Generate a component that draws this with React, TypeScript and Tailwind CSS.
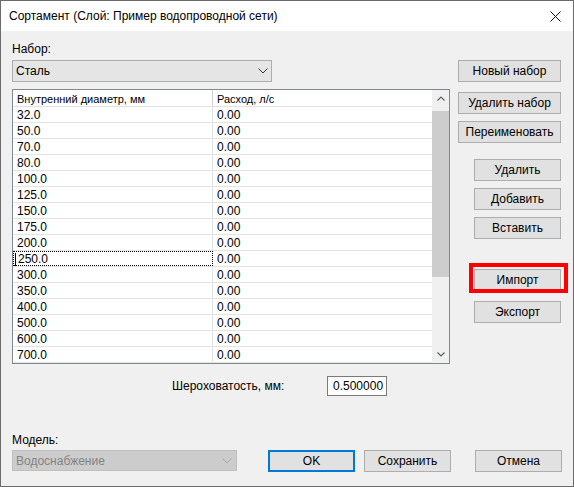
import React from 'react';

const diameters = [
    '32.0', '50.0', '70.0', '80.0', '100.0', '125.0', '150.0', '175.0',
    '200.0', '250.0', '300.0', '350.0', '400.0', '500.0', '600.0', '700.0',
];

const ui = { fontFamily: '"Liberation Sans", Arial, sans-serif' };

const Chevron: React.FC<{ color?: string }> = ({ color = '#333333' }) => (
    <svg width="10" height="6" viewBox="0 0 10 6" fill="none">
        <path d="M0.5 0.5 L5 5 L9.5 0.5" stroke={color} strokeWidth="1" />
    </svg>
);

const Button: React.FC<{ label: string; className?: string; primary?: boolean }> = ({
    label,
    className = '',
    primary = false,
}) => (
    <div
        className={`flex items-center justify-center bg-[#e1e1e1] text-[12px] leading-[16px] text-black ${
            primary ? 'border-2 border-[#0078d7]' : 'border border-[#adadad]'
        } ${className}`}
    >
        {label}
    </div>
);

export default function App() {
    return (
        <div
            className="w-[574px] h-[487px] border border-[#6b6b6b] flex flex-col bg-[#f0f0f0] text-black"
            style={ui}
        >
            {/* Title bar */}
            <div className="h-[30px] bg-white flex items-center justify-between pl-[8px] pr-[12px]">
                <span className="text-[12px] leading-[16px]">Сортамент (Слой: Пример водопроводной сети)</span>
                <svg width="11" height="11" viewBox="0 0 11 11" fill="none">
                    <path d="M0.5 0.5 L10.5 10.5 M10.5 0.5 L0.5 10.5" stroke="#111111" strokeWidth="1" />
                </svg>
            </div>

            {/* Body */}
            <div className="flex flex-col pl-[11px] pr-[11px]">
                <div className="flex">
                    {/* Left column */}
                    <div className="w-[438px] flex flex-col pt-[10px]">
                        <div className="text-[12px] leading-[16px]">Набор:</div>
                        <div className="mt-[3px] w-[260px] h-[22px] bg-[#e5e5e5] border border-[#adadad] flex items-center justify-between pl-[3px] pr-[3px]">
                            <span className="text-[12px] leading-[16px]">Сталь</span>
                            <Chevron />
                        </div>

                        {/* Table */}
                        <div className="mt-[7px] h-[275px] border border-[#828790] bg-white flex overflow-hidden">
                            <div className="flex flex-col w-[419px]">
                                <div className="flex h-[17px] border-b border-[#e0e0e0] text-[11px] leading-[19px] shrink-0">
                                    <div className="w-[200px] border-r border-[#d0d0d0] pl-[4px]">Внутренний диаметр, мм</div>
                                    <div className="flex-1 pl-[4px]">Расход, л/с</div>
                                </div>
                                {diameters.map((d, i) => (
                                    <div key={d} className="flex h-[16px] border-b border-[#e3e3e3] text-[12px] leading-[16px] shrink-0">
                                        <div
                                            className={`w-[200px] pl-[4px] relative ${
                                                i === 9
                                                    ? 'border border-dotted border-black leading-[14px]'
                                                    : 'border-r border-[#e3e3e3]'
                                            }`}
                                        >
                                            {i === 9 && (
                                                <span className="absolute left-[1px] top-[1px] w-px h-[13px] bg-black" />
                                            )}
                                            {d}
                                        </div>
                                        <div className="flex-1 pl-[4px]">0.00</div>
                                    </div>
                                ))}
                            </div>
                            {/* Scrollbar */}
                            <div className="w-[17px] bg-[#f0f0f0] flex flex-col">
                                <div className="h-[17px] flex items-center justify-center">
                                    <svg width="8" height="5" viewBox="0 0 8 5" fill="none">
                                        <path d="M0.5 4.5 L4 1 L7.5 4.5" stroke="#606060" strokeWidth="1.2" />
                                    </svg>
                                </div>
                                <div className="mt-[4px] h-[166px] bg-[#cdcdcd]" />
                                <div className="flex-1" />
                                <div className="h-[17px] flex items-center justify-center">
                                    <svg width="8" height="5" viewBox="0 0 8 5" fill="none">
                                        <path d="M0.5 0.5 L4 4 L7.5 0.5" stroke="#606060" strokeWidth="1.2" />
                                    </svg>
                                </div>
                            </div>
                        </div>
                    </div>

                    {/* Right column */}
                    <div className="ml-[8px] w-[103px] flex flex-col items-end pt-[29px]">
                        <Button label="Новый набор" className="w-[103px] h-[22px]" />
                        <Button label="Удалить набор" className="w-[103px] h-[22px] mt-[10px]" />
                        <Button label="Переименовать" className="w-[103px] h-[22px] mt-[7px]" />
                        <Button label="Удалить" className="w-[87px] h-[22px] mt-[16px]" />
                        <Button label="Добавить" className="w-[87px] h-[22px] mt-[7px]" />
                        <Button label="Вставить" className="w-[87px] h-[22px] mt-[7px]" />
                        <div className="relative w-[87px] h-[22px] mt-[30px]">
                            <Button label="Импорт" className="w-[87px] h-[22px]" />
                            <div className="absolute -left-[5px] -right-[7px] -top-[6px] -bottom-[2px] border-4 border-[#ff0000] pointer-events-none" />
                        </div>
                        <Button label="Экспорт" className="w-[87px] h-[22px] mt-[10px]" />
                    </div>
                </div>

                {/* Roughness */}
                <div className="flex items-center mt-[12px] pl-[160px]">
                    <div className="w-[155px] text-[12px] leading-[16px]">Шероховатость, мм:</div>
                    <div className="w-[60px] h-[20px] bg-white border border-[#7a7a7a] flex items-center pl-[5px] text-[12px] leading-[16px]">
                        0.500000
                    </div>
                </div>

                {/* Bottom */}
                <div className="flex items-end mt-[36px]">
                    <div className="flex flex-col w-[225px]">
                        <div className="text-[12px] leading-[16px]">Модель:</div>
                        <div className="mt-[2px] mb-[1px] h-[21px] bg-[#cccccc] border border-[#bfbfbf] flex items-center justify-between pl-[3px] pr-[4px]">
                            <span className="text-[12px] leading-[16px] text-[#838383]">Водоснабжение</span>
                            <Chevron color="#a8a8a8" />
                        </div>
                    </div>
                    <Button label="OK" primary className="ml-[31px] w-[87px] h-[22px]" />
                    <Button label="Сохранить" className="ml-[9px] w-[87px] h-[22px]" />
                    <Button label="Отмена" className="ml-[24px] w-[87px] h-[22px]" />
                </div>
            </div>
        </div>
    );
}
